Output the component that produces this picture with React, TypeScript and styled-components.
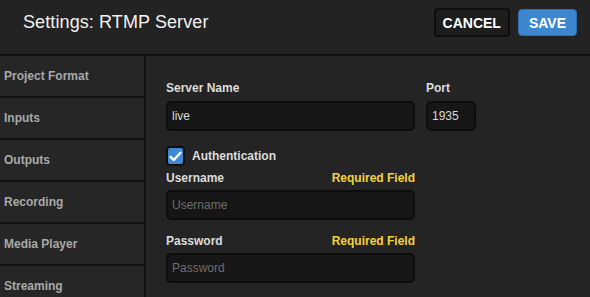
import React from "react";
import styled, { createGlobalStyle } from "styled-components";

const Global = createGlobalStyle`
  html, body { margin: 0; padding: 0; background: #242424; }
  body { font-family: "Liberation Sans", Arial, sans-serif; }
  * { box-sizing: border-box; }
`;

const Page = styled.div`
  width: 590px;
  height: 297px;
  overflow: hidden;
  background: #242424;
  display: flex;
  flex-direction: column;
`;

const Header = styled.header`
  height: 56px;
  flex: none;
  display: flex;
  align-items: center;
  justify-content: space-between;
  padding: 0 13px 9px 23px;
  background: #232323;
  border-bottom: 2px solid #111;
`;

const Title = styled.h1`
  margin: 0;
  font-size: 18px;
  font-weight: normal;
  color: #f2f2f2;
  letter-spacing: 0.1px;
`;

const Actions = styled.div`
  display: flex;
  gap: 8px;
  align-items: center;
`;

const Button = styled.button<{ $primary?: boolean }>`
  height: ${(p) => (p.$primary ? "27px" : "29px")};
  padding: 0 ${(p) => (p.$primary ? "10px" : "7px")};
  border-radius: 4px;
  font-family: "Liberation Sans", Arial, sans-serif;
  font-weight: bold;
  font-size: 14px;
  color: #fff;
  background: ${(p) => (p.$primary ? "#3c87cf" : "#1d1d1d")};
  border: ${(p) => (p.$primary ? "1px solid #2f6fae" : "2px solid #0e0e0e")};
`;

const Body = styled.div`
  flex: 1;
  display: flex;
  min-height: 0;
`;

const Sidebar = styled.nav`
  width: 146px;
  flex: none;
  border-right: 2px solid #111;
  display: flex;
  flex-direction: column;
`;

const NavItem = styled.div`
  height: 42px;
  flex: none;
  line-height: 41px;
  padding-left: 4px;
  border-bottom: 2px solid #111;
  background: #262626;
  color: #a9a9a9;
  font-weight: bold;
  font-size: 12px;
`;

const Content = styled.main`
  flex: 1;
  padding: 25px 0 0 20px;
  display: flex;
  flex-direction: column;
`;

const Row = styled.div`
  display: flex;
  gap: 11px;
`;

const Field = styled.div<{ $w: number; $mt?: number }>`
  width: ${(p) => p.$w}px;
  margin-top: ${(p) => p.$mt ?? 0}px;
  display: flex;
  flex-direction: column;
`;

const LabelRow = styled.div<{ $mb?: number }>`
  height: 14px;
  line-height: 14px;
  margin-bottom: ${(p) => p.$mb ?? 6}px;
  display: flex;
  justify-content: space-between;
  font-weight: bold;
  font-size: 12px;
`;

const Label = styled.span`
  color: #dcdcdc;
`;

const Required = styled.span`
  color: #f3d33b;
`;

const Input = styled.input`
  height: 30px;
  width: 100%;
  border-radius: 5px;
  border: 2px solid #0d0d0d;
  background: #161616;
  color: #dadada;
  font-family: "Liberation Sans", Arial, sans-serif;
  font-size: 12px;
  padding: 0 4px;
  outline: none;
  &::placeholder { color: #6d6d6d; }
`;

const CheckRow = styled.label`
  margin-top: 15px;
  height: 20px;
  display: flex;
  align-items: center;
  gap: 7px;
  font-weight: bold;
  font-size: 12px;
  color: #dcdcdc;
`;

const Box = styled.span`
  width: 19px;
  height: 20px;
  border-radius: 4px;
  border: 2px solid #0f0f0f;
  background: #3e89d1;
  display: flex;
  align-items: center;
  justify-content: center;
`;

const navItems = ["Project Format", "Inputs", "Outputs", "Recording", "Media Player", "Streaming"];

export default function App() {
  return (
    <Page>
      <Global />
      <Header>
        <Title>Settings: RTMP Server</Title>
        <Actions>
          <Button>CANCEL</Button>
          <Button $primary>SAVE</Button>
        </Actions>
      </Header>
      <Body>
        <Sidebar>
          {navItems.map((n) => (
            <NavItem key={n}>{n}</NavItem>
          ))}
        </Sidebar>
        <Content>
          <Row>
            <Field $w={249}>
              <LabelRow><Label>Server Name</Label></LabelRow>
              <Input defaultValue="live" />
            </Field>
            <Field $w={50}>
              <LabelRow><Label>Port</Label></LabelRow>
              <Input defaultValue="1935" />
            </Field>
          </Row>
          <CheckRow>
            <Box>
              <svg width="13" height="11" viewBox="0 0 13 11">
                <path d="M1.5 5.8 L4.8 9 L11.5 1.8" fill="none" stroke="#fff" strokeWidth="2.4" strokeLinecap="round" strokeLinejoin="round" />
              </svg>
            </Box>
            Authentication
          </CheckRow>
          <Field $w={249} $mt={5}>
            <LabelRow $mb={5}><Label>Username</Label><Required>Required Field</Required></LabelRow>
            <Input placeholder="Username" />
          </Field>
          <Field $w={249} $mt={14}>
            <LabelRow $mb={5}><Label>Password</Label><Required>Required Field</Required></LabelRow>
            <Input placeholder="Password" type="password" />
          </Field>
        </Content>
      </Body>
    </Page>
  );
}
